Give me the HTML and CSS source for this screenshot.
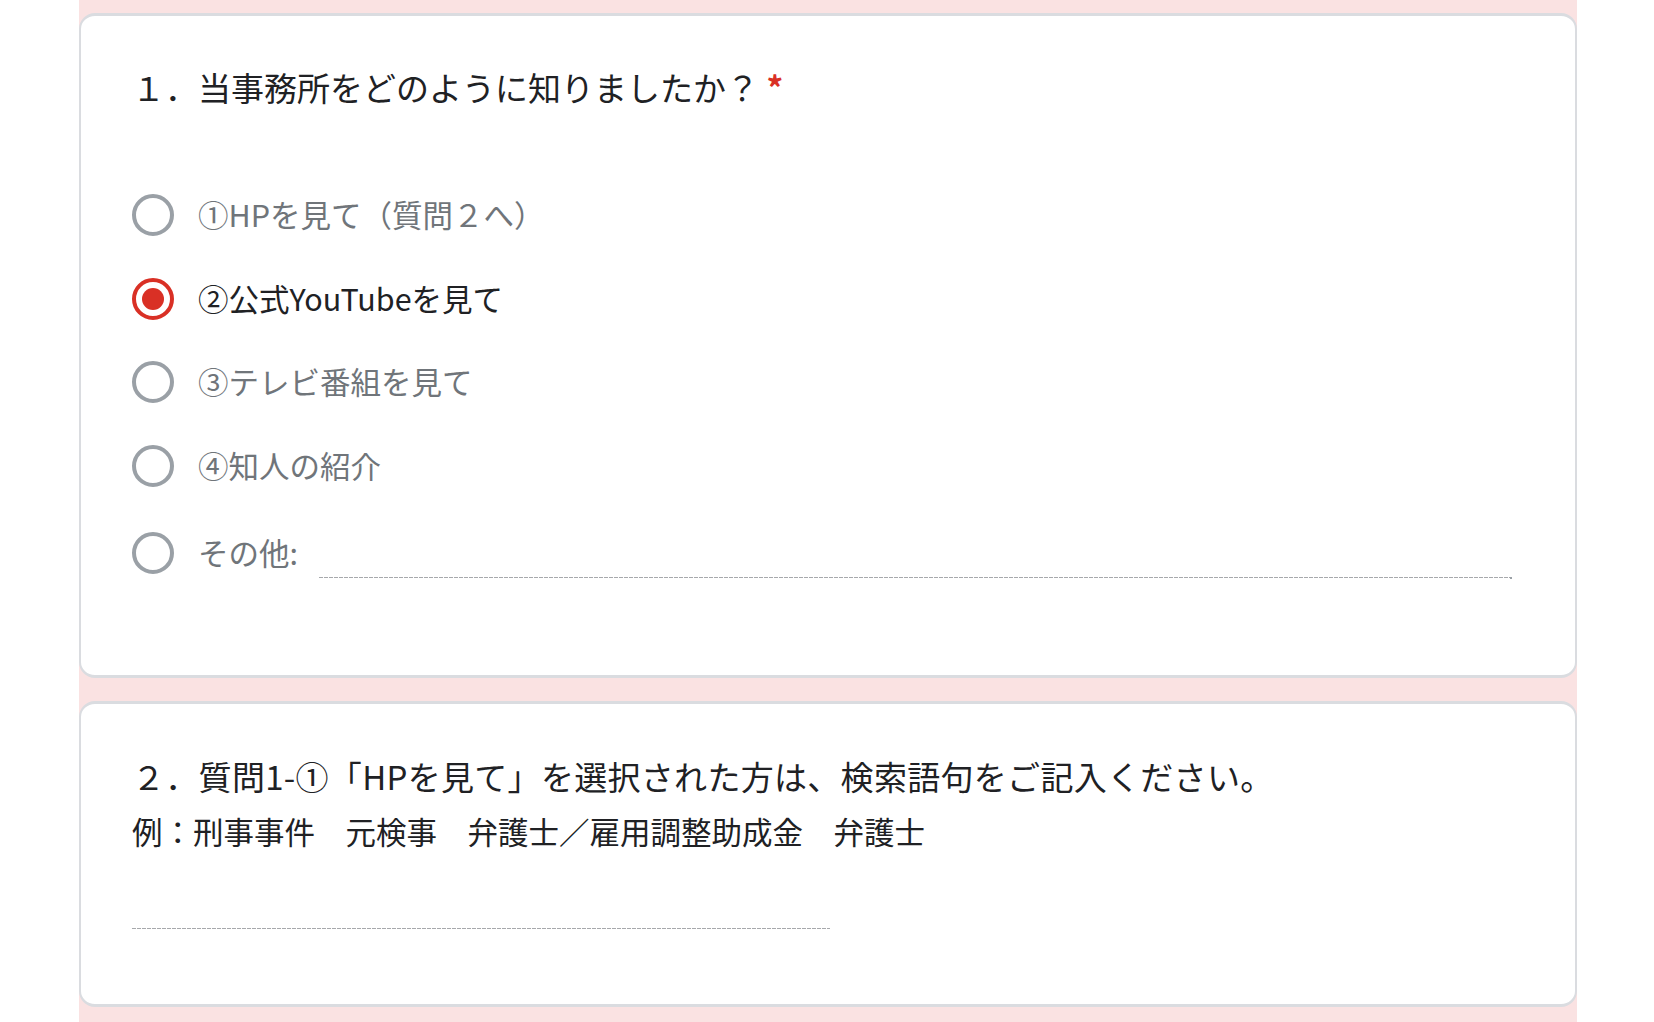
FILE: index.html
```html
<!DOCTYPE html>
<html lang="ja">
<head>
<meta charset="utf-8">
<title>アンケート</title>
<link rel="stylesheet" href="styles.css">
</head>
<body>
<div class="page">
  <section class="card q1">
    <div class="qtitle">１．当事務所をどのように知りましたか？ <span class="req">*</span></div>
    <div class="options">
      <div class="opt"><span class="radio"></span><span class="otext">①HPを見て（質問２へ）</span></div>
      <div class="opt selected"><span class="radio checked"></span><span class="otext">②公式YouTubeを見て</span></div>
      <div class="opt"><span class="radio"></span><span class="otext">③テレビ番組を見て</span></div>
      <div class="opt"><span class="radio"></span><span class="otext">④知人の紹介</span></div>
      <div class="opt other"><span class="radio"></span><span class="otext">その他:</span><span class="other-input"></span></div>
    </div>
  </section>
  <section class="card q2">
    <div class="qtitle wide">２．質問1-①「HPを見て」を選択された方は、検索語句をご記入ください。</div>
    <div class="qdesc">例：刑事事件　元検事　弁護士／雇用調整助成金　弁護士</div>
    <div class="text-input"></div>
  </section>
</div>
</body>
</html>
```

FILE: styles.css
```css
html, body {
  margin: 0;
  padding: 0;
  background: #ffffff;
}

body {
  font-family: "Noto Sans CJK JP", "Noto Sans", sans-serif;
  color: #202124;
}

.page {
  margin-left: 79px;
  width: 1498px;
  background: #fae2e2;
  padding-top: 13px;
  padding-bottom: 40px;
}

.card {
  background: #ffffff;
  border: 2px solid #dadce0;
  border-top-width: 3px;
  border-bottom-width: 3px;
  border-radius: 16px;
  padding-left: 51px;
  padding-right: 65px;
}

.card + .card {
  margin-top: 23.5px;
}

.q1 {
  padding-top: 51px;
  padding-bottom: 101px;
}

.qtitle {
  font-size: 33px;
  line-height: 40px;
  color: #202124;
  white-space: nowrap;
}

.qtitle.wide {
  letter-spacing: 0.3px;
}

.req {
  color: #d93025;
  font-weight: 700;
}

.options {
  margin-top: 87px;
  display: flex;
  flex-direction: column;
  gap: 41.5px;
}

.opt {
  display: flex;
  align-items: center;
  height: 42px;
}

.opt.other {
  margin-top: 3.5px;
}

.radio {
  flex: none;
  width: 42px;
  height: 42px;
  box-sizing: border-box;
  border: 4.5px solid #9aa0a6;
  border-radius: 50%;
  position: relative;
}

.radio.checked {
  border-color: #d93025;
}

.radio.checked::after {
  content: "";
  position: absolute;
  left: 50%;
  top: 50%;
  width: 22px;
  height: 22px;
  margin: -11px 0 0 -11px;
  border-radius: 50%;
  background: #d93025;
}

.otext {
  margin-left: 24px;
  font-size: 30.5px;
  line-height: 40px;
  padding-bottom: 2px;
  color: #70757a;
  white-space: nowrap;
}

.opt.selected .otext {
  color: #202124;
}

.other-input {
  flex: 1;
  align-self: flex-end;
  height: 40px;
  margin-left: 21px;
  margin-bottom: -4px;
  position: relative;
  background: repeating-linear-gradient(to right, #a7a9ac 0 4px, transparent 4px 5px) left bottom / 100% 1px no-repeat;
}

.other-input::after {
  content: "";
  position: absolute;
  right: -2px;
  bottom: -1px;
  width: 2px;
  height: 2px;
  background: #9aa0a6;
}

.q2 {
  padding-top: 52px;
  padding-bottom: 75px;
}

.qdesc {
  margin-top: 17px;
  font-size: 30.5px;
  line-height: 36px;
  color: #202124;
  white-space: nowrap;
}

.text-input {
  margin-top: 40px;
  width: 698px;
  height: 40px;
  background: repeating-linear-gradient(to right, #a7a9ac 0 4px, transparent 4px 5px) left bottom / 100% 1px no-repeat;
}
```
